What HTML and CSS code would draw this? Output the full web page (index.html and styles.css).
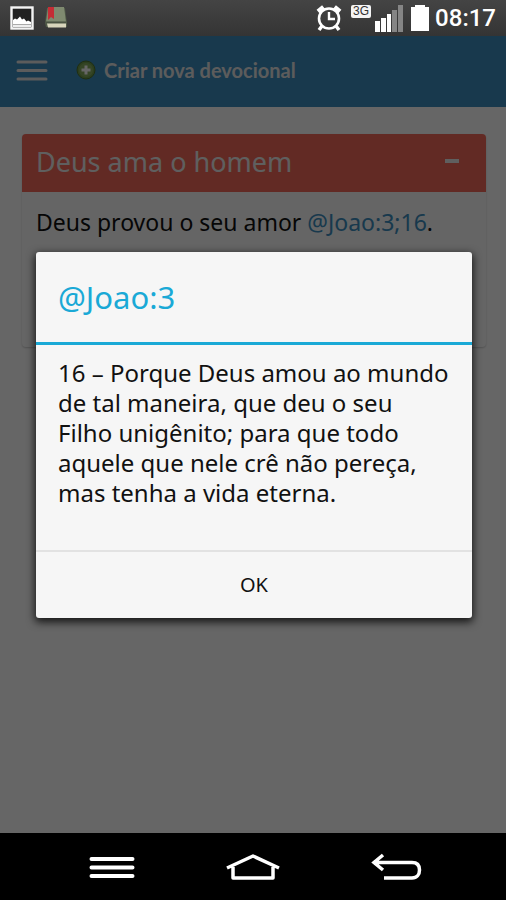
FILE: index.html
```html
<!DOCTYPE html>
<html lang="pt">
<head>
<meta charset="utf-8">
<meta name="viewport" content="width=device-width, initial-scale=1">
<title>Devocional</title>
<link rel="stylesheet" href="styles.css">
</head>
<body>
<div class="screen">
  <div class="status">
    <svg class="photo" width="24" height="24" viewBox="0 0 24 24" aria-hidden="true">
      <rect x="1.500" y="1.500" width="21" height="21" fill="#202020" stroke="#f4f4f4" stroke-width="2.400"/>
      <path d="M3 18v-4l2-1.500 2 1 3-3 2 3 2-1 2.500 3 1.500-1 3 1.500v2z" fill="#fff"/>
      <path d="M3 18.500h18" stroke="#aaa" stroke-width="1"/>
      <path d="M3 20h18" stroke="#eee" stroke-width="2"/>
    </svg>
    <svg class="book" width="24" height="24" viewBox="0 0 24 24" aria-hidden="true">
      <path d="M3 2h18l2 15v4H2L1 17z" fill="#505a48"/>
      <path d="M4 1h16l2 15H2z" fill="#7f8a70"/>
      <path d="M2 16h20" stroke="#454d3c" stroke-width="1"/>
      <path d="M3 17.500h19v4H4z" fill="#d8d5bc"/>
      <path d="M4 1h6v12l-3-2-3 3z" fill="#c42d35"/>
    </svg>
    <span class="space"></span>
    <svg class="alarm" width="28" height="28" viewBox="0 0 28 28" fill="none" stroke="#fff" aria-hidden="true">
      <circle cx="14" cy="14.500" r="10" stroke-width="2.600"/>
      <path d="M14 8v7h6" stroke-width="2.400"/>
      <path d="M3 7.500L8.500 3M25 7.500L19.500 3" stroke-width="4.500"/>
      <path d="M7 22l-3 4M21 22l3 4" stroke-width="3.500"/>
    </svg>
    <span class="network">3G</span>
    <svg class="signal" width="28" height="28" viewBox="0 0 28 28" aria-hidden="true">
      <path d="M0 17h5v11H0zM6 14h5v14H6zM12 10h4v18h-4z" fill="#fff"/>
      <path d="M17 6h5v22h-5zM23 1h5v27h-5z" fill="#858585"/>
    </svg>
    <svg class="battery" width="18" height="26" viewBox="0 0 18 26" aria-hidden="true">
      <path d="M4 0h10v2h4v24H0V2h4z" fill="#fff"/>
    </svg>
    <time class="clock">08:17</time>
  </div>

  <div class="app">
    <header class="appbar">
      <button class="menu" type="button" aria-label="Menu">
        <svg width="32" height="24" viewBox="0 0 32 24" stroke="#e6e6e6" stroke-width="3" stroke-linecap="round" aria-hidden="true"><path d="M2 4h28M2 12.500h28M2 21h28"/></svg>
      </button>
      <a class="create" href="#">
        <svg width="20" height="20" viewBox="0 0 20 20" aria-hidden="true">
          <circle cx="10" cy="10" r="9" fill="#6f9c4c" stroke="#4f742b"/>
          <circle cx="10" cy="10" r="7" fill="#86ad60"/>
          <path d="M10 5.500v9M5.500 10h9" stroke="#fff" stroke-width="3"/>
        </svg>
        Criar nova devocional
      </a>
    </header>
    <main class="content">
      <article class="card">
        <h1 class="card-head">Deus ama o homem
          <button class="collapse" type="button" aria-label="Recolher"></button>
        </h1>
        <p class="card-text">Deus provou o seu amor <a href="#">@Joao:3;16</a>.</p>
      </article>
    </main>
    <div class="backdrop">
      <section class="dialog" role="dialog" aria-modal="true" aria-labelledby="dialog-title">
        <h2 class="dialog-title" id="dialog-title">@Joao:3</h2>
        <p class="dialog-text">16 – Porque Deus amou ao mundo de tal maneira, que deu o seu Filho unigênito; para que todo aquele que nele crê não pereça, mas tenha a vida eterna.</p>
        <button class="ok" type="button">OK</button>
      </section>
    </div>
  </div>

  <nav class="nav">
    <button type="button" aria-label="Opções">
      <svg width="56" height="32" viewBox="0 0 56 32" stroke="#fff" stroke-width="4" stroke-linecap="round" aria-hidden="true"><path d="M8.500 8h41M8.500 16.500h41M8.500 25h41"/></svg>
    </button>
    <button type="button" aria-label="Início">
      <svg width="56" height="32" viewBox="0 0 56 32" fill="none" stroke="#fff" stroke-width="3.500" stroke-linejoin="round" aria-hidden="true"><path d="M2 17L28 5l26 12M8 16v11h40V16"/></svg>
    </button>
    <button type="button" aria-label="Voltar">
      <svg width="56" height="32" viewBox="0 0 56 32" fill="none" stroke="#fff" stroke-width="3.500" aria-hidden="true"><path d="M16 4L7 11.500l9 7.500M7 11.500h38c5 0 7.500 3 7.500 7.500s-2.500 8-7.500 8H17"/></svg>
    </button>
  </nav>
</div>
</body>
</html>
```

FILE: styles.css
```css
* {
  box-sizing: border-box;
}

body {
  margin: 0;
  font-family: "Noto Sans", sans-serif;
  font-size: 24px;
  color: #111;
}

h1,
h2,
p {
  margin: 0;
  font-weight: 400;
}

button {
  padding: 0;
  border: 0;
  background: none;
  font: inherit;
  color: inherit;
}

a {
  color: inherit;
  text-decoration: none;
}

svg {
  display: block;
  flex: none;
}

.screen {
  display: flex;
  flex-direction: column;
  min-height: 100vh;
}

.status {
  display: flex;
  align-items: center;
  height: 36px;
  padding: 0 10px;
  background: linear-gradient(#444, #343434);
  color: #fff;
}

.book {
  margin-left: 10px;
}

.space {
  flex: 1;
}

.network {
  align-self: flex-start;
  margin: 5px 4px 0 8px;
  padding: 0 2px;
  border-radius: 2px;
  background: #f4f4f4;
  color: #333;
  font: 400 12px/13px "Liberation Sans", sans-serif;
}

.battery {
  margin: 0 6px 0 8px;
}

.clock {
  font: 500 24px/36px Roboto, sans-serif;
}

.app {
  position: relative;
  flex: 1;
  background: #fff;
}

.appbar {
  display: flex;
  align-items: center;
  gap: 28px;
  height: 71px;
  padding: 0 16px 4px;
  background: #3c8ec0;
}

.create {
  display: flex;
  align-items: center;
  gap: 8px;
  font: 700 20px/24px Lato, sans-serif;
  color: #e6e6e6;
}

.content {
  padding: 27px 20px 0 22px;
}

.card {
  min-height: 213px;
  border-radius: 4px;
  background: #fcfcfc;
  box-shadow: 0 1px 2px rgba(0, 0, 0, 0.2);
}

.card-head {
  display: flex;
  align-items: center;
  justify-content: space-between;
  height: 58px;
  padding: 0 27px 4px 14px;
  border-radius: 4px 4px 0 0;
  background: #f56a5a;
  font-size: 27px;
  color: #eee;
}

.collapse {
  width: 14px;
  height: 4px;
  background: #eee;
}

.card-text {
  padding: 14px;
  font-size: 23px;
  line-height: 32px;
}

.card-text a {
  color: #3c8ec0;
}

.backdrop {
  position: absolute;
  inset: 0;
  display: flex;
  align-items: center;
  justify-content: center;
  padding: 0 34px 0 36px;
  background: rgba(0, 0, 0, 0.6);
}

.dialog {
  flex: 1;
  border-radius: 3px;
  background: #f6f6f6;
  box-shadow: 0 3px 8px 1px rgba(0, 0, 0, 0.8);
}

.dialog-title {
  padding: 23px 22px;
  border-bottom: 3px solid #1aa9d6;
  font-size: 31px;
  line-height: 44px;
  color: #1aa9d6;
}

.dialog-text {
  padding: 13px 22px 42px;
  line-height: 30px;
}

.ok {
  display: block;
  width: 100%;
  height: 68px;
  border-top: 2px solid #e2e2e2;
  font-size: 20px;
}

.nav {
  display: flex;
  align-items: center;
  justify-content: space-between;
  height: 67px;
  padding: 0 83px;
  background: #000;
}
```
